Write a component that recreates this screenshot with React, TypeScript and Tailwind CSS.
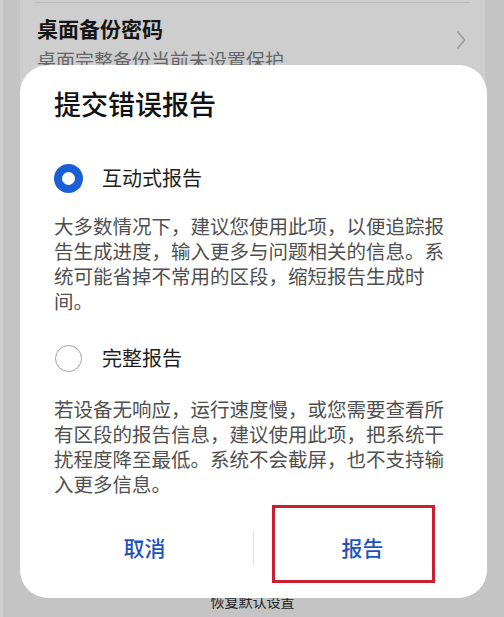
import React from "react";

const FONT = '"Noto Sans CJK SC", "Noto Sans", Roboto, sans-serif';

function Radio({ checked }: { checked: boolean }) {
  return (
    <div className="w-[29px] h-[29px] flex items-center justify-center shrink-0">
      {checked ? (
        <div className="w-[29px] h-[29px] rounded-full border-[8px] border-[#1a5ed8] bg-white" />
      ) : (
        <div className="w-[27px] h-[27px] rounded-full border-[1.5px] border-[#a0a0a0] bg-white" />
      )}
    </div>
  );
}

export default function App() {
  return (
    <div
      className="relative w-[504px] h-[617px] overflow-hidden bg-[#c4c4c4]"
      style={{ fontFamily: FONT }}
    >
      {/* background page */}
      <div className="flex h-full">
        <div className="w-[3px] h-full bg-[#cfcfcf]" />
        <div className="w-[17px]" />
        <div className="flex-1 flex flex-col">
          <div className="h-[200px] bg-[#cecece] relative">
            <div className="mx-[15px] h-[3px] border-b border-[#bdbdbd]" />
            <div className="flex items-center pl-[17px] pr-[19px]">
              <div className="flex-1">
                <div className="mt-[10px] text-[21px] leading-[30px] font-bold text-[#151515]">
                  桌面备份密码
                </div>
                <div className="mt-[4px] text-[19px] leading-[26px] text-[#666]">
                  桌面完整备份当前未设置保护
                </div>
              </div>
              <svg width="10" height="20" viewBox="0 0 10 20" className="mt-[4px]">
                <polyline points="1.5,1.5 8.5,10 1.5,18.5" fill="none" stroke="#9c9c9c" strokeWidth="1.6" />
              </svg>
            </div>
          </div>
          <div className="mt-auto pb-[7px] text-center text-[14px] leading-[18px] text-[#222]">
            恢复默认设置
          </div>
        </div>
        <div className="w-[19px]" />
      </div>

      {/* dialog overlay */}
      <div className="absolute left-[20px] top-[65px] w-[467px] h-[533px] bg-white rounded-[28px] flex flex-col">
        <div className="pl-[34px] pr-[36px] pt-[21px]">
          <div className="text-[27px] leading-[36px] font-medium text-[#111]">提交错误报告</div>

          <div className="mt-[38px] h-[36px] flex items-center gap-[19px]">
            <Radio checked />
            <span className="text-[20px] text-[#1e1e1e]">互动式报告</span>
          </div>
          <p className="mt-[17px] text-[19.5px] leading-[25px] text-[#4f4f4f]">
            大多数情况下，建议您使用此项，以便追踪报告生成进度，输入更多与问题相关的信息。系统可能省掉不常用的区段，缩短报告生成时间。
          </p>

          <div className="mt-[27px] h-[36px] flex items-center gap-[19px]">
            <Radio checked={false} />
            <span className="text-[20px] text-[#1e1e1e]">完整报告</span>
          </div>
          <p className="mt-[20px] text-[19.5px] leading-[25px] text-[#4f4f4f]">
            若设备无响应，运行速度慢，或您需要查看所有区段的报告信息，建议使用此项，把系统干扰程度降至最低。系统不会截屏，也不支持输入更多信息。
          </p>
        </div>

        <div className="mt-auto mb-[15px] h-[70px] px-[16px] flex items-center relative">
          <button className="flex-1 h-full text-[21px] font-medium text-[#1f52bd]">取消</button>
          <div className="w-px h-[34px] bg-[#e2e2e2]" />
          <button className="flex-1 h-full text-[21px] font-medium text-[#1f52bd]">报告</button>
          <div className="absolute left-[252px] top-[-8px] w-[163px] h-[78px] border-[3px] border-[#c8202e] pointer-events-none" />
        </div>
      </div>
    </div>
  );
}
